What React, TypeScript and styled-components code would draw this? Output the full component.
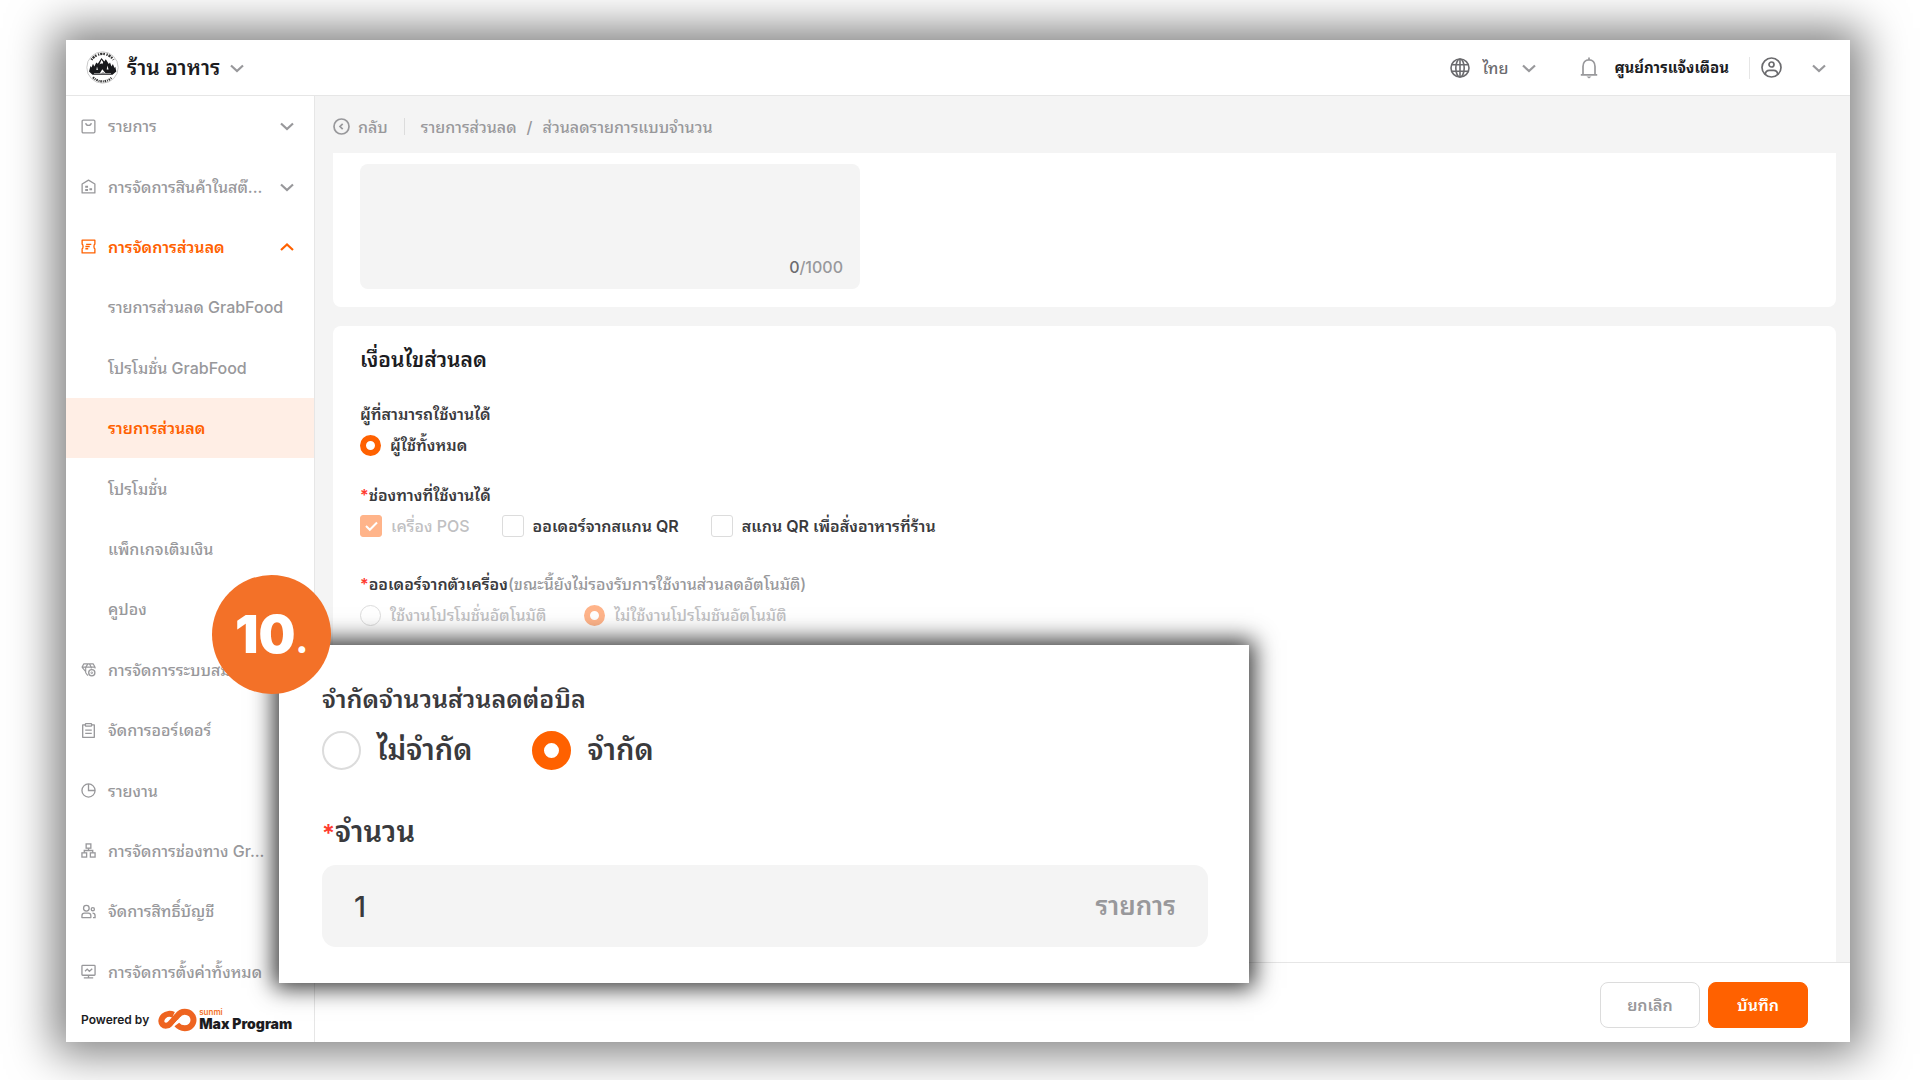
import React, { useState } from "react";
import styled, { createGlobalStyle, css } from "styled-components";

const color = {
  brand: "#ff6100",
  badge: "#f37128",
  soft: "#ffeee5",
  ink: "#1c1c1f",
  body: "#3a3a3d",
  muted: "#98989b",
  faint: "#c0c0c2",
  line: "#e6e6e6",
  box: "#dcdcdc",
  fill: "#f4f4f4",
  red: "#ff3b30",
};

const GlobalStyle = createGlobalStyle`
  * { box-sizing: border-box; }
  body {
    margin: 0;
    background: #fff;
    color: ${color.body};
    font-family: Inter, "Noto Sans Thai Looped", "Noto Sans Thai", sans-serif;
    font-size: 16px;
    font-weight: 500;
    line-height: 24px;
  }
  button, input, select, textarea { font: inherit; color: inherit; }
  button { padding: 0; border: 0; background: none; cursor: pointer; }
  a { color: inherit; text-decoration: none; }
  h1, h2, p, ul { margin: 0; padding: 0; }
  ul { list-style: none; }
  fieldset { min-width: 0; margin: 0; padding: 0; border: 0; }
  legend { padding: 0; }
  svg { display: block; flex: none; }
`;

const Page = styled.div`
  display: flex;
  min-height: 100vh;
  padding: 40px 70px 38px 66px;
  overflow: hidden;
`;

const Window = styled.div`
  position: relative;
  flex: 1;
  min-width: 0;
  display: flex;
  flex-direction: column;
  background: #fff;
  box-shadow: 0 0 42px 12px rgba(0, 0, 0, 0.5);
`;

const TopBar = styled.header`
  display: flex;
  align-items: center;
  justify-content: space-between;
  height: 56px;
  padding: 0 24px 0 20px;
  border-bottom: 1px solid ${color.line};
`;

const ShopButton = styled.button`
  display: flex;
  align-items: center;
  gap: 8px;
  color: ${color.ink};
  font-size: 21px;
  font-weight: 600;
`;

const ShopName = styled.span`
  margin-right: 2px;
`;

const TopActions = styled.div`
  display: flex;
  align-items: center;
`;

const Language = styled.label`
  display: flex;
  align-items: center;
  gap: 12px;
  margin-right: 44px;
  color: #6b6b6e;
`;

const LanguageSelect = styled.select`
  appearance: none;
  width: 28px;
  padding: 0;
  border: 0;
  background: none;
`;

const AlertButton = styled.button`
  display: flex;
  align-items: center;
  gap: 16px;
  padding-right: 20px;
  border-right: 1px solid ${color.line};
  color: ${color.ink};
  font-size: 15px;
  font-weight: 700;
  line-height: 20px;
`;

const AccountButton = styled.button`
  display: flex;
  align-items: center;
  gap: 30px;
  margin-left: 11px;
  color: #6b6b6e;
`;

const Body = styled.div`
  flex: 1;
  display: flex;
  min-height: 0;
`;

const SideBar = styled.aside`
  flex: none;
  width: 249px;
  display: flex;
  flex-direction: column;
  border-right: 1px solid ${color.line};
`;

const Nav = styled.nav`
  flex: 1;
  display: flex;
`;

const NavList = styled.ul`
  flex: 1;
  display: grid;
  grid-auto-rows: 1fr;
`;

const NavLink = styled.a<{ $tone?: "open" | "current"; $sub?: boolean }>`
  display: flex;
  align-items: center;
  gap: 12px;
  height: 100%;
  padding: 0 20px 0 ${(p) => (p.$sub ? 42 : 15)}px;
  color: ${(p) => (p.$tone ? color.brand : color.muted)};
  background: ${(p) => (p.$tone === "current" ? color.soft : "transparent")};
  font-weight: ${(p) => (p.$tone ? 600 : 500)};
  white-space: nowrap;
`;

const NavText = styled.span`
  flex: 1;
`;

const Powered = styled.div`
  display: flex;
  align-items: center;
  gap: 9px;
  height: 40px;
  padding: 0 15px 4px;
  color: ${color.ink};
  font-size: 12px;
  font-weight: 600;
  line-height: 16px;
  white-space: nowrap;
`;

const Brand = styled.div`
  display: flex;
  align-items: center;
  gap: 2px;
`;

const BrandText = styled.div`
  display: flex;
  flex-direction: column;
  font-size: 14px;
  font-weight: 900;
  line-height: 16px;
`;

const BrandSmall = styled.span`
  color: ${color.badge};
  font-size: 8px;
  font-weight: 600;
  line-height: 8px;
`;

const Main = styled.main`
  flex: 1;
  min-width: 0;
  display: flex;
  flex-direction: column;
`;

const Content = styled.div`
  flex: 1;
  display: flex;
  flex-direction: column;
  padding: 0 14px 0 18px;
  background: ${color.fill};
`;

const Crumbs = styled.nav`
  display: flex;
  align-items: center;
  height: 57px;
  padding-top: 4px;
  color: ${color.muted};
`;

const BackButton = styled.button`
  display: flex;
  align-items: center;
  gap: 8px;
  padding-right: 16px;
  margin-right: 16px;
  border-right: 1px solid #dcdcdc;
  line-height: 16px;
`;

const Slash = styled.span`
  margin: 0 10px;
`;

const Card = styled.section<{ $continued?: boolean }>`
  padding: 0 27px;
  background: #fff;
  ${(p) =>
    p.$continued
      ? css`
          margin-bottom: 19px;
          padding-top: 11px;
          padding-bottom: 18px;
          border-radius: 0 0 8px 8px;
        `
      : css`
          flex: 1;
          padding-top: 20px;
          border-radius: 8px 8px 0 0;
        `}
`;

const NoteBox = styled.label`
  display: flex;
  flex-direction: column;
  width: 500px;
  max-width: 100%;
  height: 125px;
  padding: 10px 17px;
  border-radius: 8px;
  background: ${color.fill};
`;

const Note = styled.textarea`
  flex: 1;
  padding: 0;
  border: 0;
  outline: 0;
  resize: none;
  background: none;
`;

const Counter = styled.span`
  align-self: flex-end;
  color: ${color.muted};
`;

const CounterNow = styled.span`
  color: #6b6b6e;
`;

const CardTitle = styled.h2`
  margin-bottom: 24px;
  color: ${color.ink};
  font-size: 21px;
  font-weight: 600;
  line-height: 28px;
`;

const Group = styled.fieldset<{ $gap: number }>`
  margin-bottom: ${(p) => p.$gap}px;
`;

const GroupTitle = styled.legend`
  height: 31px;
  line-height: 32px;
  font-weight: 600;
  white-space: nowrap;
`;

const Star = styled.span`
  color: ${color.red};
`;

const Hint = styled.span`
  color: ${color.muted};
  font-weight: 500;
`;

const Options = styled.div<{ $gap: number }>`
  display: flex;
  flex-wrap: wrap;
  gap: ${(p) => p.$gap}px;
  min-height: 32px;
`;

const Option = styled.label<{ $disabled?: boolean; $large?: boolean }>`
  display: flex;
  align-items: center;
  gap: ${(p) => (p.$large ? 16 : 9)}px;
  color: ${(p) => (p.$disabled ? color.faint : color.body)};
  font-size: ${(p) => (p.$large ? 29 : 16)}px;
  font-weight: ${(p) => (p.$disabled ? 500 : 600)};
  line-height: ${(p) => (p.$large ? 40 : 32)}px;
  white-space: nowrap;
`;

const Radio = styled.input<{ $large?: boolean }>`
  appearance: none;
  flex: none;
  width: ${(p) => (p.$large ? 39 : 21)}px;
  height: ${(p) => (p.$large ? 39 : 21)}px;
  margin: 0;
  border: ${(p) => (p.$large ? 2 : 1)}px solid ${color.box};
  border-radius: 50%;
  background: #fff;
  &:checked {
    border: ${(p) => (p.$large ? 12 : 6)}px solid ${color.brand};
  }
  &:checked:disabled {
    border-color: #ffb48a;
  }
`;

const CheckMark = styled.span`
  display: grid;
  flex: none;
  > * {
    grid-area: 1 / 1;
    place-self: center;
    pointer-events: none;
  }
`;

const Check = styled.input`
  && {
    appearance: none;
    width: 22px;
    height: 22px;
    margin: 0;
    border: 1px solid ${color.box};
    border-radius: 3px;
    background: #fff;
    pointer-events: auto;
  }
  & + svg {
    visibility: hidden;
  }
  &&:checked {
    border-color: ${color.brand};
    background: ${color.brand};
  }
  &&:checked:disabled {
    border-color: #ffb48a;
    background: #ffb48a;
  }
  &:checked + svg {
    visibility: visible;
  }
`;

const ActionBar = styled.footer`
  display: flex;
  align-items: center;
  justify-content: flex-end;
  gap: 8px;
  height: 80px;
  padding: 4px 42px 0;
  border-top: 1px solid ${color.line};
`;

const ActionButton = styled.button<{ $primary?: boolean }>`
  width: 100px;
  height: 46px;
  border: 1px solid ${(p) => (p.$primary ? color.brand : color.box)};
  border-radius: 8px;
  background: ${(p) => (p.$primary ? color.brand : "#fff")};
  color: ${(p) => (p.$primary ? "#fff" : color.muted)};
  font-weight: 600;
`;

const Callout = styled.section`
  position: absolute;
  left: 213px;
  top: 605px;
  width: 970px;
  padding: 36px 41px 36px 43px;
  background: #fff;
  box-shadow: 0 0 22px 5px rgba(0, 0, 0, 0.8);
`;

const CalloutTitle = styled.legend`
  margin-bottom: 13px;
  font-size: 25px;
  font-weight: 600;
  line-height: 36px;
`;

const FieldLabel = styled.label`
  display: block;
  margin: 42px 0 13px;
  font-size: 29px;
  font-weight: 600;
  line-height: 40px;
`;

const FieldStar = styled(Star)`
  font-size: 24px;
  line-height: 24px;
`;

const FieldBox = styled.div`
  display: flex;
  align-items: center;
  height: 82px;
  padding: 0 32px;
  border-radius: 14px;
  background: ${color.fill};
`;

const FieldInput = styled.input`
  flex: 1;
  min-width: 0;
  padding: 0;
  border: 0;
  outline: 0;
  background: none;
  font-size: 29px;
`;

const Unit = styled.span`
  color: ${color.muted};
  font-size: 26px;
  font-weight: 600;
`;

const StepBadge = styled.div`
  position: absolute;
  left: 146px;
  top: 535px;
  display: flex;
  align-items: baseline;
  justify-content: center;
  width: 119px;
  height: 119px;
  border-radius: 50%;
  background: ${color.badge};
  color: #fff;
  font-size: 52px;
  font-weight: 900;
  line-height: 119px;
`;

const StepDot = styled.span`
  font-size: 34px;
`;

const icon = (size: number) => ({
  width: size,
  height: size,
  viewBox: "0 0 16 16",
  fill: "none",
  stroke: "currentColor",
  strokeWidth: 1.4,
  "aria-hidden": true,
});

const Chevron = ({ up = false, tone = "#98989b" }: { up?: boolean; tone?: string }) => (
  <svg width="14" height="14" viewBox="0 0 14 14" fill="none" stroke={tone} strokeWidth="2.200" aria-hidden>
    <path d={up ? "M1 10 7 4.500 13 10" : "M1 4.500 7 10l6-5.500"} />
  </svg>
);

const glyphs: Record<string, React.ReactNode> = {
  bag: (
    <>
      <rect x="1.200" y="1.200" width="13.600" height="13.600" rx="1.200" />
      <path d="M5 4.300c.3 1.700 1.500 2.500 3 2.500s2.700-.8 3-2.500" />
    </>
  ),
  store: (
    <>
      <path d="M1.200 5.300 8 1.200l6.800 4.100v9.500H1.200z" strokeLinejoin="round" />
      <path d="M4.500 8.200h3M4.500 11.800h3M9 11h2.800" strokeWidth="2.200" />
    </>
  ),
  ticket: (
    <>
      <path d="M1.200 1.200h13.600v4.300c-1.300.6-1.300 4.400 0 5v4.300H1.200v-4.300c1.300-.6 1.300-4.400 0-5z" strokeLinejoin="round" />
      <path d="M5.500 5.700h5.500M4.700 8h4.600M4.700 10.400h3" />
    </>
  ),
  gem: (
    <>
      <path
        d="M7.300 14.500 5 11.500V6M1 5.500 3 2h10l2 3.500v1.500M1 5.500 4.800 10M1 5.500h14M5 5.500 7.500 2M11 5.500 9 2M11 5.500v1.300"
        strokeLinejoin="round"
        strokeWidth="1.200"
      />
      <circle cx="11.500" cy="11.500" r="3.300" />
      <circle cx="11.500" cy="11.500" r=".9" strokeWidth="1" />
    </>
  ),
  clipboard: (
    <>
      <path d="M4.500 2H1.800v13.300h12.400V2h-2.700" strokeLinejoin="round" />
      <rect x="4.700" y=".7" width="6.600" height="2.600" rx=".6" />
      <path d="M4.500 7.500h7M4.500 11h7" />
    </>
  ),
  pie: (
    <>
      <circle cx="8" cy="8" r="7" />
      <path d="M8 1v7h7" />
    </>
  ),
  nodes: (
    <>
      <rect x="5.500" y="1" width="5" height="4.500" />
      <rect x="1" y="10.500" width="5" height="4.500" />
      <rect x="10" y="10.500" width="5" height="4.500" />
      <path d="M8 5.500V8M3.500 10.500V8h9v2.500" />
    </>
  ),
  people: (
    <>
      <circle cx="5.700" cy="4.500" r="3" />
      <path d="M1 14.500v-2c0-1.700 1.200-2.800 2.800-2.800h3.900c1.600 0 2.800 1.100 2.800 2.800v2z" strokeLinejoin="round" />
      <circle cx="12.600" cy="5.500" r="1.700" />
      <path d="M12.300 9.700c1.700 0 2.700 1 2.700 2.500v2.300h-2.200" />
    </>
  ),
  screen: (
    <>
      <rect x="1" y="1.500" width="14" height="10.500" rx=".8" />
      <path d="m4.300 7.800 2.300-2.300 2.300 2.300L12 5M8 12v2.500M3 14.700h10" />
    </>
  ),
};

const NavIcon = ({ name }: { name: string }) => <svg {...icon(15)}>{glyphs[name]}</svg>;

const Globe = () => (
  <svg width="20" height="20" viewBox="0 0 20 20" fill="none" stroke="#6b6b6e" strokeWidth="1.600" aria-hidden>
    <circle cx="10" cy="10" r="9" />
    <ellipse cx="10" cy="10" rx="4.200" ry="9" />
    <path d="M1.800 6.800h16.400M1.800 13.200h16.400M10 1v18" />
  </svg>
);

const Bell = () => (
  <svg width="18" height="22" viewBox="0 0 18 22" fill="none" stroke="#98989b" strokeWidth="1.700" aria-hidden>
    <path d="M9 .5v2.300M3 17.800V9.500c0-4 2.500-6.700 6-6.700s6 2.700 6 6.700v8.300M.8 17.900h16.400" />
    <path d="M6.500 19.500h5L9 21.500z" fill="#98989b" stroke="none" />
  </svg>
);

const Account = () => (
  <svg width="21" height="21" viewBox="0 0 21 21" fill="none" stroke="#6b6b6e" strokeWidth="1.700" aria-hidden>
    <circle cx="10.500" cy="10.500" r="9.500" />
    <circle cx="10.500" cy="7.500" r="2.500" />
    <path d="M4.300 17.200c.3-2.700 1.800-3.900 4-3.900h4.400c2.200 0 3.700 1.200 4 3.900" />
  </svg>
);

const BackIcon = () => (
  <svg width="17" height="17" viewBox="0 0 17 17" fill="none" stroke="currentColor" strokeWidth="1.700" aria-hidden>
    <circle cx="8.500" cy="8.500" r="7.500" />
    <path d="M9.700 5.800 7 8.500l2.700 2.700" />
  </svg>
);

const ShopLogo = () => (
  <svg width="33" height="33" viewBox="0 0 33 33" fill="none" aria-hidden>
    <circle cx="16.500" cy="16.500" r="15.700" fill="#fff" stroke="#c9c9c9" />
    <path d="M5.500 8.800a13.200 13.200 0 0 1 22 0" stroke="#333" strokeWidth="2.400" strokeDasharray="1.300 .9 2.200 .8 1.600 1.600" />
    <path d="M7 26.300a13.200 13.200 0 0 0 19 0" stroke="#333" strokeWidth="2.200" strokeDasharray="1.500 .9 1 .8" />
    <path
      d="M3 20.500 4.500 15l1 1.500L7 12.800l1.300 2.700 2-4 1.500 1.300L15.500 7l2.800 3.500 1.500-2.200 3 4.700 1.200-1.500 1.500 4 1.400-2.500L28.500 17l.8-1.200 1 4.700-3.800 3.200H6.500z"
      fill="#18191c"
    />
    <path d="m15.500 8.800 1.700 2.400-1 2-1-1-1.700 1.300zM11 15.500l.9 3.500h-1.500zM21.500 14.500l1 4h-1.800zM13.700 22.500l2.600-4.200 3.500 4.200-2.700-1z" fill="#fff" />
    <path d="M8 22.500h17" stroke="#fff" strokeWidth=".5" />
  </svg>
);

const BrandLogo = () => (
  <svg width="39" height="24" viewBox="0 0 39 24" fill="none" stroke="#ee6420" strokeWidth="6" aria-hidden>
    <path d="M15.500 6.800C12.500 5.300 8.500 5.500 5.800 8c-2.800 2.600-3.200 6.300-1.200 8.300 2.100 2.100 5.600 1.700 8-.9l6.500-7.300C21.300 5.300 23.700 3.800 26.700 3.800c5 0 8.800 3.600 8.800 8.200s-3.800 8.200-8.800 8.200c-3.300 0-5.900-1.200-7.900-3.700" />
    <path d="m14.800 17.800 5-5.700" stroke="#fff" strokeWidth="1" />
  </svg>
);

type Item = { text: string; icon?: string; arrow?: "up" | "down"; tone?: "open" | "current" };

const items: Item[] = [
  { text: "รายการ", icon: "bag", arrow: "down" },
  { text: "การจัดการสินค้าในสต๊...", icon: "store", arrow: "down" },
  { text: "การจัดการส่วนลด", icon: "ticket", arrow: "up", tone: "open" },
  { text: "รายการส่วนลด GrabFood" },
  { text: "โปรโมชั่น GrabFood" },
  { text: "รายการส่วนลด", tone: "current" },
  { text: "โปรโมชั่น" },
  { text: "แพ็กเกจเติมเงิน" },
  { text: "คูปอง" },
  { text: "การจัดการระบบสม...", icon: "gem" },
  { text: "จัดการออร์เดอร์", icon: "clipboard" },
  { text: "รายงาน", icon: "pie" },
  { text: "การจัดการช่องทาง Gr...", icon: "nodes" },
  { text: "จัดการสิทธิ์บัญชี", icon: "people" },
  { text: "การจัดการตั้งค่าทั้งหมด", icon: "screen" },
];

const CheckOption = ({ text, checked, disabled }: { text: string; checked?: boolean; disabled?: boolean }) => (
  <Option $disabled={disabled}>
    <CheckMark>
      <Check type="checkbox" defaultChecked={checked} disabled={disabled} />
      <svg width="13" height="13" viewBox="0 0 13 13" fill="none" stroke="#fff" strokeWidth="2" aria-hidden>
        <path d="m1 6 3.800 3.800L12 2.500" />
      </svg>
    </CheckMark>
    {text}
  </Option>
);

export default function App() {
  const [note, setNote] = useState("");
  const [limit, setLimit] = useState("limited");
  const [amount, setAmount] = useState("1");

  return (
    <>
      <GlobalStyle />
      <Page>
        <Window>
          <TopBar>
            <ShopButton type="button">
              <ShopLogo />
              <ShopName>ร้าน อาหาร</ShopName>
              <Chevron />
            </ShopButton>
            <TopActions>
              <Language>
                <Globe />
                <LanguageSelect aria-label="ภาษา" defaultValue="th">
                  <option value="th">ไทย</option>
                </LanguageSelect>
                <Chevron />
              </Language>
              <AlertButton type="button">
                <Bell />
                ศูนย์การแจ้งเตือน
              </AlertButton>
              <AccountButton type="button" aria-label="บัญชี">
                <Account />
                <Chevron />
              </AccountButton>
            </TopActions>
          </TopBar>
          <Body>
            <SideBar>
              <Nav>
                <NavList>
                  {items.map((item) => (
                    <li key={item.text}>
                      <NavLink href="#" $sub={!item.icon} $tone={item.tone}>
                        {item.icon && <NavIcon name={item.icon} />}
                        <NavText>{item.text}</NavText>
                        {item.arrow && (
                          <Chevron up={item.arrow === "up"} tone={item.tone ? color.brand : undefined} />
                        )}
                      </NavLink>
                    </li>
                  ))}
                </NavList>
              </Nav>
              <Powered>
                Powered by
                <Brand>
                  <BrandLogo />
                  <BrandText>
                    <BrandSmall>sunmi</BrandSmall>
                    Max Program
                  </BrandText>
                </Brand>
              </Powered>
            </SideBar>
            <Main>
              <Content>
                <Crumbs>
                  <BackButton type="button">
                    <BackIcon />
                    กลับ
                  </BackButton>
                  <a href="#">รายการส่วนลด</a>
                  <Slash>/</Slash>
                  <span>ส่วนลดรายการแบบจำนวน</span>
                </Crumbs>
                <Card $continued>
                  <NoteBox>
                    <Note
                      aria-label="หมายเหตุ"
                      maxLength={1000}
                      value={note}
                      onChange={(e) => setNote(e.target.value)}
                    />
                    <Counter>
                      <CounterNow>{note.length}</CounterNow>/1000
                    </Counter>
                  </NoteBox>
                </Card>
                <Card>
                  <CardTitle>เงื่อนไขส่วนลด</CardTitle>
                  <Group $gap={18}>
                    <GroupTitle>ผู้ที่สามารถใช้งานได้</GroupTitle>
                    <Options $gap={32}>
                      <Option>
                        <Radio type="radio" name="who" defaultChecked />
                        ผู้ใช้ทั้งหมด
                      </Option>
                    </Options>
                  </Group>
                  <Group $gap={26}>
                    <GroupTitle>
                      <Star>*</Star>ช่องทางที่ใช้งานได้
                    </GroupTitle>
                    <Options $gap={32}>
                      <CheckOption text="เครื่อง POS" checked disabled />
                      <CheckOption text="ออเดอร์จากสแกน QR" />
                      <CheckOption text="สแกน QR เพื่อสั่งอาหารที่ร้าน" />
                    </Options>
                  </Group>
                  <Group $gap={0}>
                    <GroupTitle>
                      <Star>*</Star>ออเดอร์จากตัวเครื่อง
                      <Hint>(ขณะนี้ยังไม่รองรับการใช้งานส่วนลดอัตโนมัติ)</Hint>
                    </GroupTitle>
                    <Options $gap={38}>
                      <Option $disabled>
                        <Radio type="radio" name="auto" disabled />
                        ใช้งานโปรโมชั่นอัตโนมัติ
                      </Option>
                      <Option $disabled>
                        <Radio type="radio" name="auto" defaultChecked disabled />
                        ไม่ใช้งานโปรโมชันอัตโนมัติ
                      </Option>
                    </Options>
                  </Group>
                </Card>
              </Content>
              <ActionBar>
                <ActionButton type="button">ยกเลิก</ActionButton>
                <ActionButton type="button" $primary>
                  บันทึก
                </ActionButton>
              </ActionBar>
            </Main>
          </Body>
          <Callout>
            <fieldset>
              <CalloutTitle>จำกัดจำนวนส่วนลดต่อบิล</CalloutTitle>
              <Options $gap={60}>
                <Option $large>
                  <Radio
                    $large
                    type="radio"
                    name="limit"
                    checked={limit === "none"}
                    onChange={() => setLimit("none")}
                  />
                  ไม่จำกัด
                </Option>
                <Option $large>
                  <Radio
                    $large
                    type="radio"
                    name="limit"
                    checked={limit === "limited"}
                    onChange={() => setLimit("limited")}
                  />
                  จำกัด
                </Option>
              </Options>
            </fieldset>
            <FieldLabel htmlFor="amount">
              <FieldStar>*</FieldStar>จำนวน
            </FieldLabel>
            <FieldBox>
              <FieldInput id="amount" inputMode="numeric" value={amount} onChange={(e) => setAmount(e.target.value)} />
              <Unit>รายการ</Unit>
            </FieldBox>
          </Callout>
          <StepBadge>
            10<StepDot>.</StepDot>
          </StepBadge>
        </Window>
      </Page>
    </>
  );
}
